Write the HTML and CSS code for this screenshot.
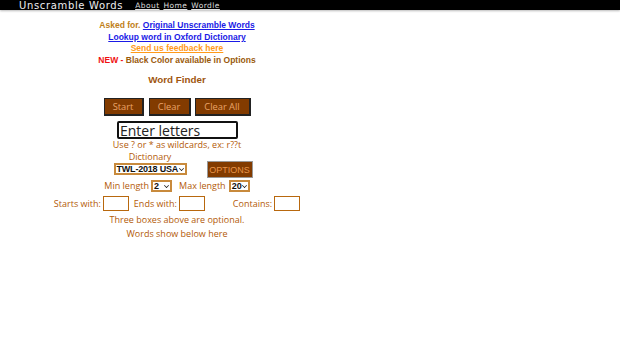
FILE: index.html
```html
<!DOCTYPE html>
<html>
<head>
<meta charset="utf-8">
<link rel="stylesheet" href="styles.css">
</head>
<body>
<div class="topbar">
  <span class="brand">Unscramble Words</span>
  <nav class="nav"><a href="#">About</a> <a href="#">Home</a> <a href="#">Wordle</a></nav>
</div>
<main class="col">
  <div class="notice">
    <div class="l1"><span class="gold">Asked for.</span> <a class="blue" href="#">Original Unscramble Words</a></div>
    <div class="l2"><a class="blue" href="#">Lookup word in Oxford Dictionary</a></div>
    <div class="l3"><a class="orange" href="#">Send us feedback here</a></div>
    <div class="l4"><span class="red">NEW -</span> <span class="brown">Black Color available in Options</span></div>
  </div>
  <h1 class="title">Word Finder</h1>
  <div class="btns">
    <button class="btn b-start">Start</button>
    <button class="btn b-clear">Clear</button>
    <button class="btn b-all">Clear All</button>
  </div>
  <div class="inrow"><input class="letters" type="text" placeholder="Enter letters"></div>
  <div class="hint">Use ? or * as wildcards, ex: r??t</div>
  <div class="dictrow">
    <div class="dict">
      <div class="lbl">Dictionary</div>
      <div class="sel sel-dict">TWL-2018 USA<span class="caret"></span></div>
    </div>
    <button class="opt">OPTIONS</button>
  </div>
  <div class="lenrow">
    <span>Min length</span>
    <div class="sel sel-min">2<span class="caret"></span></div>
    <span class="maxl">Max length</span>
    <div class="sel sel-max">20<span class="caret"></span></div>
  </div>
  <div class="boxrow">
    <span>Starts with:</span><span class="box"></span>
    <span class="ends">Ends with:</span><span class="box"></span>
    <span class="cont">Contains:</span><span class="box"></span>
  </div>
  <div class="note">Three boxes above are optional.</div>
  <div class="note n2">Words show below here</div>
</main>
</body>
</html>
```
FILE: styles.css
```css
html, body { margin: 0; padding: 0; background: #fff; }
body { font-family: "Open Sans", sans-serif; }

.topbar {
  height: 10px;
  background: #000;
  display: flex;
  align-items: flex-start;
  padding-left: 19px;
  overflow: hidden;
  box-shadow: 0 1px 2px #bbb;
  white-space: nowrap;
}
.brand {
  font-family: "DejaVu Sans", sans-serif;
  font-size: 10px;
  line-height: 11px;
  letter-spacing: 0.65px;
  color: #eee;
}
.nav {
  margin-left: 12px;
  font-family: "DejaVu Sans", sans-serif;
  font-size: 7.5px;
  line-height: 11px;
  letter-spacing: 0.45px;
  word-spacing: 1px;
}
.nav a { color: #ddd; text-decoration: underline; }

.col { width: 354px; text-align: center; }

.notice {
  margin-top: 10px;
  font-family: "Liberation Sans", Arial, sans-serif;
  font-weight: bold;
  font-size: 8.5px;
  line-height: 11.6px;
}
.gold { color: #c0801a; }
.blue { color: #1a1ae6; text-decoration: underline; }
.orange { color: #ff9a1a; text-decoration: underline; }
.red { color: #f01010; }
.brown { color: #9a5a0c; }

.title {
  margin: 7px 0 0;
  font-family: "Liberation Sans", Arial, sans-serif;
  font-weight: bold;
  font-size: 9.8px;
  line-height: 13px;
  color: #a0560e;
}

.btns {
  margin-top: 12px;
  display: flex;
  justify-content: center;
  gap: 4px;
}
.btn {
  height: 18px;
  padding: 0;
  background: #823b00;
  color: #eaa468;
  border: 1px solid #222;
  border-right-width: 2px;
  border-bottom-width: 2px;
  font-family: "Open Sans", sans-serif;
  font-size: 9.3px;
}
.b-start { width: 40px; }
.b-clear { width: 42px; margin-left: 1px; }
.b-all { width: 56px; }

.inrow { margin-top: 5px; display: flex; justify-content: center; }
.letters {
  width: 121px;
  height: 18px;
  box-sizing: border-box;
  border: 2px solid #111;
  border-radius: 2px;
  padding: 0 0 0 1px;
  margin: 0 0 0 1px;
  font-family: "Open Sans", sans-serif;
  font-size: 14px;
}
.letters::placeholder { color: #222; opacity: 1; }

.hint, .lbl, .lenrow, .boxrow, .note {
  font-family: "Open Sans", sans-serif;
  font-size: 9px;
  color: #b35a08;
}
.hint { margin-top: 0; line-height: 12px; }

.dictrow {
  display: flex;
  justify-content: center;
  align-items: flex-end;
  gap: 20px;
  padding-left: 12px;
}
.dict { display: flex; flex-direction: column; align-items: center; }
.lbl { line-height: 12px; }

.sel {
  box-sizing: border-box;
  height: 12px;
  border: 2px solid #c88a3c;
  background: #fff;
  color: #111;
  font-family: "Liberation Sans", Arial, sans-serif;
  font-weight: bold;
  font-size: 9px;
  line-height: 8px;
  display: flex;
  align-items: center;
  padding-left: 1px;
  text-align: left;
  white-space: nowrap;
}
.caret {
  flex: none;
  width: 4px; height: 4px;
  border-right: 1.2px solid #111;
  border-bottom: 1.2px solid #111;
  transform: rotate(45deg) scale(0.7);
  margin: -2px 1px 0 auto;
}
.sel-dict { width: 73px; letter-spacing: -0.2px; }
.opt {
  height: 17px;
  width: 46px;
  padding: 0;
  margin-bottom: -3px;
  background: #823b00;
  color: #e8944a;
  border: 1px solid #999;
  font-family: "Liberation Sans", Arial, sans-serif;
  font-size: 9px;
}

.lenrow {
  margin-top: 5px;
  display: flex;
  justify-content: center;
  align-items: center;
  line-height: 12px;
}
.sel-min { width: 21px; margin-left: 2px; }
.sel-max { width: 21px; margin-left: 3px; }
.maxl { margin-left: 7px; }

.boxrow {
  margin-top: 4px;
  display: flex;
  justify-content: center;
  align-items: center;
  line-height: 15px;
}
.box {
  width: 26px;
  height: 15px;
  box-sizing: border-box;
  border: 1.5px solid #b8680e;
  margin-left: 2px;
}
.ends { margin-left: 5px; }
.cont { margin-left: 28px; }

.note { margin-top: 2px; line-height: 14px; }
.n2 { margin-top: 0; }
```
